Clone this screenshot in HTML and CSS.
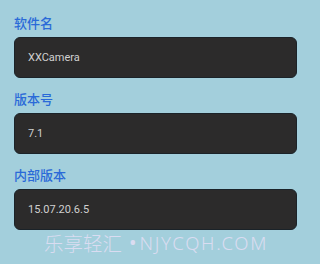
FILE: index.html
```html
<!DOCTYPE html>
<html>
<head>
<meta charset="utf-8">
<link rel="stylesheet" href="styles.css">
</head>
<body>
<div class="page">
  <div class="field">
    <div class="label">软件名</div>
    <div class="box">XXCamera</div>
  </div>
  <div class="field">
    <div class="label">版本号</div>
    <div class="box">7.1</div>
  </div>
  <div class="field">
    <div class="label">内部版本</div>
    <div class="box">15.07.20.6.5</div>
  </div>
  <div class="watermark"><span class="wm-cjk">乐享轻汇</span><span class="wm-dot">•</span><span class="wm-latin">NJYCQH.COM</span></div>
</div>
</body>
</html>
```
FILE: styles.css
```css
html, body {
  margin: 0;
  padding: 0;
}
body {
  background: #a3cfdc;
  width: 311px;
  height: 264px;
  overflow: hidden;
}
.page {
  position: relative;
  height: 264px;
  box-sizing: border-box;
  padding: 15px 14px 0 14px;
  display: flex;
  flex-direction: column;
  gap: 13px;
}
.field {
  display: flex;
  flex-direction: column;
  gap: 6px;
}
.label {
  font-family: "Noto Sans CJK SC", "Noto Sans", sans-serif;
  font-size: 13px;
  line-height: 16px;
  font-weight: 500;
  color: #2a6ad8;
}
.box {
  height: 41px;
  box-sizing: border-box;
  background: #2c2b2b;
  border: 1.5px solid #1b2329;
  border-radius: 6px;
  display: flex;
  align-items: center;
  padding-left: 13px;
  font-family: Roboto, "Noto Sans", sans-serif;
  font-size: 11px;
  color: #d0d0d0;
}
.watermark {
  position: absolute;
  left: 44px;
  top: 231px;
  display: flex;
  align-items: center;
  height: 24px;
  color: rgba(240, 226, 250, 0.72);
}
.wm-cjk {
  font-family: "Noto Sans CJK SC", sans-serif;
  font-size: 19.5px;
  font-weight: 300;
  line-height: 24px;
}
.wm-dot {
  font-family: "Noto Sans", sans-serif;
  font-size: 20px;
  line-height: 24px;
  margin: 0 3px 0 7px;
}
.wm-latin {
  font-family: "Noto Sans", sans-serif;
  font-size: 18.5px;
  font-weight: 300;
  letter-spacing: 1.7px;
  line-height: 24px;
}
```
